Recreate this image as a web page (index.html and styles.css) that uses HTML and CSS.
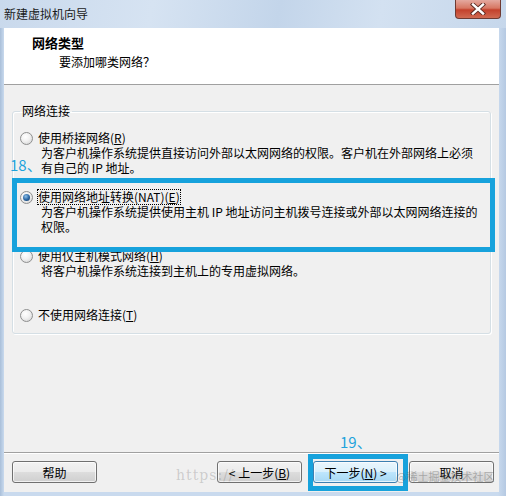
FILE: index.html
```html
<!DOCTYPE html>
<html lang="zh-CN">
<head>
    <meta charset="UTF-8">
    <title>新建虚拟机向导</title>
    <link rel="stylesheet" href="styles.css">
</head>
<body>
    <div class="window">
        <div class="titlebar">
            <span class="title">新建虚拟机向导</span>
            <div class="close-btn">
                <svg width="18" height="12" viewBox="0 0 18 12">
                    <path d="M4 1.5 L14 10.5 M14 1.5 L4 10.5" stroke="#5a2a22" stroke-width="4.2" stroke-linecap="square"/>
                    <path d="M4 1.5 L14 10.5 M14 1.5 L4 10.5" stroke="#ffffff" stroke-width="2.4" stroke-linecap="square"/>
                </svg>
            </div>
        </div>

        <div class="client">
            <div class="header">
                <div class="header-title">网络类型</div>
                <div class="header-sub">要添加哪类网络？</div>
            </div>

            <div class="content">
                <fieldset class="group">
                    <legend>网络连接</legend>

                    <div class="option">
                        <div class="option-label"><span class="radio"></span>使用桥接网络(<u>R</u>)</div>
                        <div class="option-desc">为客户机操作系统提供直接访问外部以太网网络的权限。客户机在外部网络上必须<br>有自己的 IP 地址。</div>
                    </div>

                    <div class="option">
                        <div class="option-label"><span class="radio checked"></span><span class="focus">使用网络地址转换(NAT)(<u>E</u>)</span></div>
                        <div class="option-desc">为客户机操作系统提供使用主机 IP 地址访问主机拨号连接或外部以太网网络连接的<br>权限。</div>
                    </div>

                    <div class="option">
                        <div class="option-label"><span class="radio"></span>使用仅主机模式网络(<u>H</u>)</div>
                        <div class="option-desc">将客户机操作系统连接到主机上的专用虚拟网络。</div>
                    </div>

                    <div class="option last">
                        <div class="option-label"><span class="radio"></span>不使用网络连接(<u>T</u>)</div>
                    </div>
                </fieldset>

                <!-- annotations from the tutorial screenshot -->
                <span class="step step-18">18、</span>
                <div class="mark mark-nat"></div>
            </div>

            <div class="footer">
                <button class="btn btn-help">帮助</button>
                <button class="btn">&lt; 上一步(<u>B</u>)</button>
                <button class="btn btn-default">下一步(<u>N</u>) &gt;</button>
                <button class="btn">取消</button>

                <span class="step step-19">19、</span>
                <div class="mark mark-next"></div>
                <span class="watermark wm-url">https://</span>
                <span class="watermark wm-site">@稀土掘金技术社区</span>
            </div>
        </div>
    </div>
</body>
</html>
```

FILE: styles.css
```css
body, html {
    margin: 0;
    padding: 0;
    font-family: 'Noto Sans CJK SC', 'DejaVu Sans', sans-serif;
    font-size: 12px;
    color: #000;
}
.window {
    width: 506px;
    height: 496px;
    box-sizing: border-box;
    padding: 0 7px 4px 4px;
    background: linear-gradient(to right, #a9bfd9 0, #c9daee 4px, #c9daee 498px, #b5c9e2 100%);
    display: flex;
    flex-direction: column;
    overflow: hidden;
}
.titlebar {
    height: 28px;
    margin: 0 -7px 0 -4px;
    padding: 0 5px 0 4px;
    display: flex;
    justify-content: space-between;
    align-items: flex-start;
    background: linear-gradient(100deg, #c9d9ec 0%, #d6e3f2 30%, #c3d5ea 55%, #d3e1f1 75%, #c6d7eb 100%);
}
.title {
    line-height: 28px;
    color: #1a1a1a;
}
.close-btn {
    width: 44px;
    height: 18px;
    border: 1px solid #6e3a32;
    border-top: none;
    border-radius: 0 0 4px 4px;
    background: linear-gradient(to bottom, #e4a99f 0%, #d77763 45%, #c3412c 55%, #d06a52 100%);
    display: flex;
    align-items: center;
    justify-content: center;
}
.client {
    flex: 1;
    display: flex;
    flex-direction: column;
    background-color: #f0f0f0;
}
.header {
    height: 57px;
    box-sizing: border-box;
    padding: 7px 0 0 28px;
    background-color: #fff;
    border-bottom: 1px solid #a0a0a0;
}
.header-title {
    font-weight: bold;
    font-size: 13px;
    line-height: 16px;
}
.header-sub {
    margin: 3px 0 0 27px;
    line-height: 16px;
}
.content {
    position: relative;
    flex: 1;
    padding: 18px 8px 0 8px;
}
.group {
    margin: 0;
    padding: 12px 0 11px 7px;
    border: 1px solid #d5dfe5;
    border-radius: 3px;
    box-shadow: inset 1px 1px 0 #fff, 1px 1px 0 #fff;
}
.group legend {
    padding: 0 2px;
    line-height: 16px;
}
.option {
    height: 59px;
}
.option.last {
    height: auto;
}
.option-label {
    display: flex;
    align-items: center;
    line-height: 14px;
    height: 14px;
}
.radio {
    width: 11px;
    height: 11px;
    margin-right: 5px;
    border: 1px solid #8e8f8f;
    border-radius: 50%;
    background: radial-gradient(circle at 40% 35%, #ffffff 0%, #f1f1f1 45%, #cfcfcf 100%);
    position: relative;
}
.radio.checked::after {
    content: "";
    position: absolute;
    left: 2px;
    top: 2px;
    width: 7px;
    height: 7px;
    border-radius: 50%;
    background: radial-gradient(circle at 40% 35%, #8fc0e8 0%, #2e6ba8 50%, #0d2d55 100%);
}
.focus {
    outline: 1px dotted #000;
    outline-offset: 0;
}
.option-desc {
    margin-left: 21px;
    line-height: 15px;
}
.step {
    position: absolute;
    color: #1ea3dc;
    font-size: 15px;
    line-height: 16px;
    white-space: nowrap;
}
.step-18 {
    left: 6px;
    top: 72px;
}
.mark {
    position: absolute;
    border: 5px solid #17a2dc;
    box-sizing: border-box;
}
.mark-nat {
    left: 8px;
    top: 93px;
    width: 483px;
    height: 74px;
}
.footer {
    position: relative;
    height: 40px;
    box-sizing: border-box;
    padding: 8px 5px 0 8px;
    border-top: 1px solid #a0a0a0;
    box-shadow: inset 0 1px 0 #fff;
    display: flex;
    align-items: flex-start;
    gap: 11px;
}
.btn {
    width: 85px;
    height: 22px;
    padding: 0;
    font-family: inherit;
    font-size: 12px;
    color: #000;
    border: 1px solid #707070;
    border-radius: 3px;
    background: linear-gradient(to bottom, #f2f2f2 0%, #ebebeb 50%, #dddddd 51%, #cfcfcf 100%);
    box-shadow: inset 0 0 0 1px rgba(255, 255, 255, 0.7);
}
.btn-help {
    margin-right: auto;
}
.btn-default {
    border-color: #3c7fb1;
    background: linear-gradient(to bottom, #eaf6fd 0%, #d9f0fc 50%, #bee6fd 51%, #a7d9f5 100%);
}
.step-19 {
    left: 336px;
    top: -19px;
}
.mark-next {
    left: 304px;
    top: 1px;
    width: 100px;
    height: 37px;
}
.watermark {
    position: absolute;
    color: rgba(110, 110, 110, 0.28);
    font-size: 14px;
    white-space: nowrap;
    pointer-events: none;
}
.wm-url {
    left: 172px;
    top: 14px;
    font-family: 'DejaVu Serif', serif;
    letter-spacing: 1px;
}
.wm-site {
    left: 392px;
    top: 15px;
    font-size: 11px;
    color: rgba(90, 90, 90, 0.4);
}
```
